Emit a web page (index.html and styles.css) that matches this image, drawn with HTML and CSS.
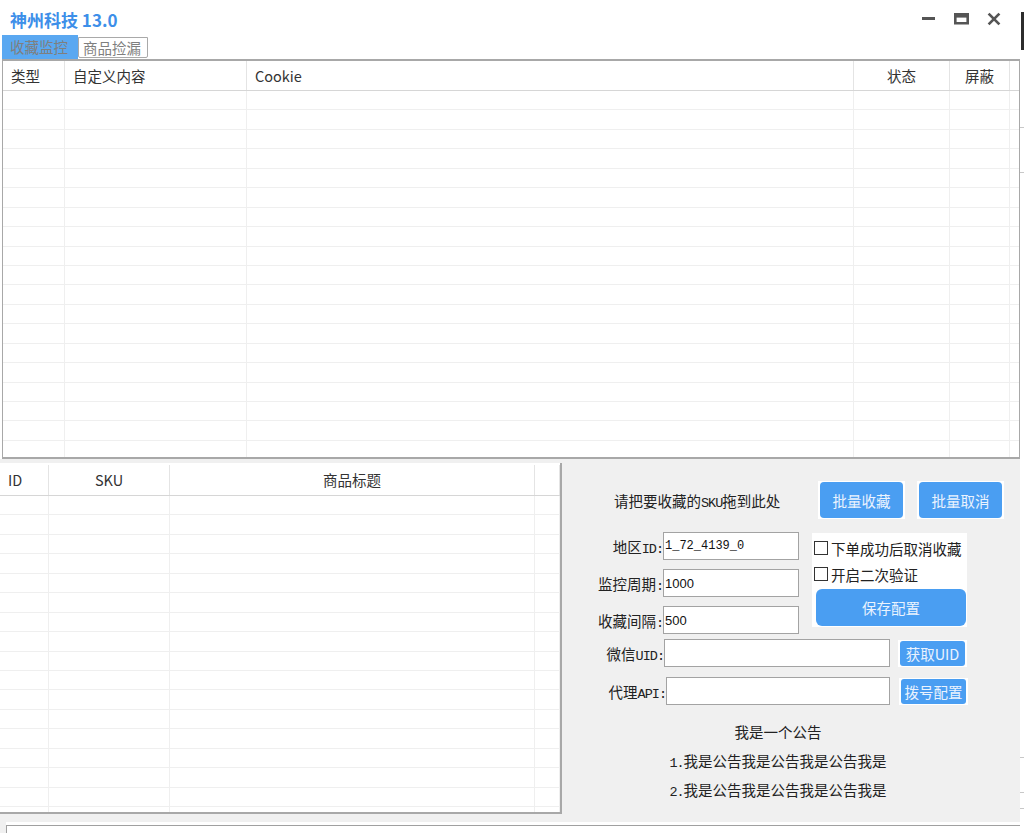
FILE: index.html
```html
<!DOCTYPE html>
<html lang="zh-CN">
<head>
<meta charset="utf-8">
<title>神州科技 13.0</title>
<link rel="stylesheet" href="styles.css">
</head>
<body>
<div class="screen">
  <div class="window">
    <header class="titlebar">
      <h1 class="title">神州科技 13.0</h1>
      <div class="controls">
        <svg class="ctl" width="16" height="16" viewBox="0 0 16 16"><rect x="2" y="7" width="13" height="3" fill="#555"/></svg>
        <svg class="ctl" width="16" height="16" viewBox="0 0 16 16"><rect x="1" y="3" width="15" height="11.5" fill="#555"/><rect x="3.6" y="7.6" width="9.8" height="4.4" fill="#fff"/></svg>
        <svg class="ctl" width="16" height="16" viewBox="0 0 16 16"><path d="M2.6 3.6 L13.4 14.4 M13.4 3.6 L2.6 14.4" stroke="#555" stroke-width="2.7" fill="none"/></svg>
      </div>
    </header>

    <nav class="tabs">
      <span class="tab active">收藏监控</span>
      <span class="tab plain">商品捡漏</span>
    </nav>

    <section class="grid grid-top">
      <div class="trow thead">
        <span class="cell">类型</span>
        <span class="cell">自定义内容</span>
        <span class="cell">Cookie</span>
        <span class="cell center">状态</span>
        <span class="cell center">屏蔽</span>
        <span class="cell last"></span>
      </div>
      <div class="tbody">
        <div class="trow"><i></i><i></i><i></i><i></i><i></i><i></i></div>
        <div class="trow"><i></i><i></i><i></i><i></i><i></i><i></i></div>
        <div class="trow"><i></i><i></i><i></i><i></i><i></i><i></i></div>
        <div class="trow"><i></i><i></i><i></i><i></i><i></i><i></i></div>
        <div class="trow"><i></i><i></i><i></i><i></i><i></i><i></i></div>
        <div class="trow"><i></i><i></i><i></i><i></i><i></i><i></i></div>
        <div class="trow"><i></i><i></i><i></i><i></i><i></i><i></i></div>
        <div class="trow"><i></i><i></i><i></i><i></i><i></i><i></i></div>
        <div class="trow"><i></i><i></i><i></i><i></i><i></i><i></i></div>
        <div class="trow"><i></i><i></i><i></i><i></i><i></i><i></i></div>
        <div class="trow"><i></i><i></i><i></i><i></i><i></i><i></i></div>
        <div class="trow"><i></i><i></i><i></i><i></i><i></i><i></i></div>
        <div class="trow"><i></i><i></i><i></i><i></i><i></i><i></i></div>
        <div class="trow"><i></i><i></i><i></i><i></i><i></i><i></i></div>
        <div class="trow"><i></i><i></i><i></i><i></i><i></i><i></i></div>
        <div class="trow"><i></i><i></i><i></i><i></i><i></i><i></i></div>
        <div class="trow"><i></i><i></i><i></i><i></i><i></i><i></i></div>
        <div class="trow"><i></i><i></i><i></i><i></i><i></i><i></i></div>
        <div class="trow"><i></i><i></i><i></i><i></i><i></i><i></i></div>
      </div>
    </section>

    <section class="lower">
      <div class="grid grid-sku">
        <div class="srow shead">
          <span class="cell">ID</span>
          <span class="cell center">SKU</span>
          <span class="cell center">商品标题</span>
          <span class="cell last"></span>
        </div>
        <div class="sbody">
          <div class="srow"><i></i><i></i><i></i><i></i></div>
          <div class="srow"><i></i><i></i><i></i><i></i></div>
          <div class="srow"><i></i><i></i><i></i><i></i></div>
          <div class="srow"><i></i><i></i><i></i><i></i></div>
          <div class="srow"><i></i><i></i><i></i><i></i></div>
          <div class="srow"><i></i><i></i><i></i><i></i></div>
          <div class="srow"><i></i><i></i><i></i><i></i></div>
          <div class="srow"><i></i><i></i><i></i><i></i></div>
          <div class="srow"><i></i><i></i><i></i><i></i></div>
          <div class="srow"><i></i><i></i><i></i><i></i></div>
          <div class="srow"><i></i><i></i><i></i><i></i></div>
          <div class="srow"><i></i><i></i><i></i><i></i></div>
          <div class="srow"><i></i><i></i><i></i><i></i></div>
          <div class="srow"><i></i><i></i><i></i><i></i></div>
          <div class="srow"><i></i><i></i><i></i><i></i></div>
          <div class="srow"><i></i><i></i><i></i><i></i></div>
          <div class="srow"><i></i><i></i><i></i><i></i></div>
        </div>
      </div>

      <div class="panel">
        <div class="drop-row">
          <span class="drop-text">请把要收藏的<span class="lat">SKU</span>拖到此处</span>
          <span class="btn-frame"><span class="btn btn-lg">批量收藏</span></span>
          <span class="btn-frame gap12"><span class="btn btn-lg">批量取消</span></span>
        </div>

        <div class="form-top">
          <div class="fields">
            <div class="field"><label class="lbl w101">地区<span class="lat">ID:</span></label><input class="inp inp-s mono" type="text" value="1_72_4139_0"></div>
            <div class="field"><label class="lbl w101">监控周期<span class="lat">:</span></label><input class="inp inp-s" type="text" value="1000"></div>
            <div class="field"><label class="lbl w101">收藏间隔<span class="lat">:</span></label><input class="inp inp-s" type="text" value="500"></div>
          </div>
          <div class="side">
            <div class="checks">
              <div class="check"><span class="box"></span>下单成功后取消收藏</div>
              <div class="check"><span class="box"></span>开启二次验证</div>
            </div>
            <div class="save-frame"><span class="btn btn-save">保存配置</span></div>
          </div>
        </div>

        <div class="field row-wx"><label class="lbl w102">微信<span class="lat">UID:</span></label><input class="inp inp-w226" type="text" value=""><span class="btn-frame ml8"><span class="btn btn-sm">获取UID</span></span></div>
        <div class="field row-api"><label class="lbl w104">代理<span class="lat">API:</span></label><input class="inp inp-w224" type="text" value=""><span class="btn-frame ml9"><span class="btn btn-sm">拨号配置</span></span></div>

        <div class="notice">
          <p>我是一个公告</p>
          <p><span class="lat">1.</span>我是公告我是公告我是公告我是</p>
          <p><span class="lat">2.</span>我是公告我是公告我是公告我是</p>
        </div>
      </div>
    </section>

    <div class="footer-row"><div class="footer"><div class="footer-field"></div></div></div>
  </div>
  <div class="strip">
    <div class="strip-dark"></div>
    <div class="strip-line l1"></div>
    <div class="strip-line l2"></div>
    <div class="strip-line l3"></div>
    <div class="strip-line l4"></div>
    <div class="strip-line l5"></div>
  </div>
</div>
</body>
</html>
```
FILE: styles.css
```css
* { box-sizing: border-box; }
html, body { margin: 0; padding: 0; }
body {
  width: 1024px;
  height: 833px;
  overflow: hidden;
  background: #fff;
  font-family: "Noto Sans CJK SC", "Microsoft YaHei", sans-serif;
  font-size: 14.5px;
  color: #222;
}
.screen { display: flex; width: 1024px; height: 833px; }
.window { width: 1020px; height: 833px; display: flex; flex-direction: column; background: #fff; }

/* title bar */
.titlebar { height: 35px; flex: none; display: flex; justify-content: space-between; align-items: flex-start; }
.title { margin: 0; padding: 8px 0 0 10px; font-size: 17px; line-height: 24px; font-weight: 700; color: #3d8fe9; }
.controls { display: flex; gap: 17px; padding: 10px 18px 0 0; }
.ctl { display: block; }

/* tabs */
.tabs { height: 24px; flex: none; display: flex; align-items: flex-end; padding-left: 2px; }
.tab { font-size: 14.5px; color: #7f7f7f; white-space: nowrap; }
.tab.active { height: 24px; width: 76px; padding-left: 8px; line-height: 23px; background: #5aa8f1; }
.tab.plain { height: 21px; width: 70px; margin-bottom: 1px; padding-left: 4px; line-height: 19px; border: 1px solid #a9a9a9; border-radius: 0 0 2px 2px; background: #fff; }

/* grids */
.grid { background: #fff; overflow: hidden; flex: none; }
.grid i { display: block; font-style: normal; }
.cell { display: block; padding-left: 8px; white-space: nowrap; overflow: hidden; }
.cell.center { padding-left: 0; text-align: center; }

.grid-top { height: 400px; margin-left: 2px; border-style: solid; border-color: #a8a8a8; border-width: 2px 1px 2px 1px; }
.trow { display: grid; grid-template-columns: 62px 182px 607px 96px 60px 1fr; height: 19.44px; border-bottom: 1px solid #efefef; }
.trow > * { border-right: 1px solid #efefef; }
.trow > *:last-child { border-right: 0; }
.thead { height: 30px; border-bottom: 1px solid #d6d6d6; line-height: 29px; color: #333; }
.thead > * { border-right-color: #e4e4e4; }
.tbody { height: 366px; overflow: hidden; }

.lower { flex: none; height: 363px; display: flex; align-items: flex-start; padding-top: 4px; background: #f0f0f0; }
.grid-sku { width: 562px; height: 351px; border-style: solid; border-color: #a8a8a8; border-width: 0 2px 2px 0; }
.srow { display: grid; grid-template-columns: 49px 121px 365px 1fr; height: 19.45px; border-bottom: 1px solid #efefef; }
.srow > * { border-right: 1px solid #efefef; }
.shead { height: 33px; border-bottom: 1px solid #d6d6d6; line-height: 30px; padding-top: 2px; color: #333; }
.shead > * { border-right-color: #e4e4e4; }
.sbody { height: 316px; overflow: hidden; }

/* right panel */
.panel { flex: 1; display: flex; flex-direction: column; color: #222; }
.lat { font-family: "Liberation Mono", monospace; font-size: 13.5px; letter-spacing: -1px; line-height: 1; }
.drop-row { margin-top: 18px; height: 38px; display: flex; align-items: center; }
.drop-text { margin-left: 52px; width: 204px; white-space: nowrap; }
.btn-frame { display: flex; background: #fff; padding: 1px 2px; }
.gap12 { margin-left: 12px; }
.ml8 { margin-left: 8px; }
.ml9 { margin-left: 9px; }
.btn { display: flex; align-items: center; justify-content: center; background: #4a9ef2; color: #eaf3fe; border-radius: 4px; white-space: nowrap; }
.btn-lg { width: 83px; height: 36px; }
.btn-sm { width: 65px; height: 25px; border-radius: 3px; }
.btn-save { width: 150px; height: 37px; border-radius: 6px; }

.form-top { margin-top: 13px; display: flex; align-items: flex-start; }
.fields { display: flex; flex-direction: column; gap: 9px; }
.field { display: flex; align-items: center; }
.lbl { text-align: right; white-space: nowrap; }
.w101 { width: 101px; }
.w102 { width: 102px; }
.w104 { width: 104px; }
.inp { height: 28px; margin: 0; padding: 0 1px; border: 1px solid #a3a3a3; background: #fff; outline: none; font-family: "Liberation Sans", sans-serif; font-size: 13px; color: #111; }
.inp.mono { font-family: "Liberation Mono", monospace; font-size: 12px; }
.inp-s { width: 136px; }
.inp-w226 { width: 226px; }
.inp-w224 { width: 224px; }

.side { margin-left: 13px; margin-top: 1px; width: 155px; }
.checks { height: 55px; padding-top: 2px; background: #fff; }
.check { height: 26px; display: flex; align-items: center; white-space: nowrap; }
.box { width: 14px; height: 14px; margin: 0 3px 0 2px; border: 1px solid #333; background: #fff; flex: none; }
.save-frame { display: flex; background: #fff; padding: 1px 1px 1px 4px; }

.row-wx { margin-top: 5px; }
.row-api { margin-top: 10px; }

.notice { width: 432px; margin-top: 12px; text-align: center; }
.notice p { margin: 0; height: 29px; line-height: 29px; }

/* footer */
.footer-row { flex: none; height: 11px; padding-left: 6px; background: #f0f0f0; }
.footer { height: 11px; padding-top: 3px; background: #fff; }
.footer-field { height: 100%; border-top: 1px solid #a0a0a0; border-left: 1px solid #a0a0a0; }

/* right edge strip (window behind) */
.strip { width: 4px; height: 833px; background: #fff; }
.strip-dark { margin: 12px 0 0 1px; height: 38px; background: #2d2d2d; }
.strip-line { height: 1px; background: #c8c8c8; }
.strip-line.l1 { margin-top: 77px; }
.strip-line.l2 { margin-top: 44px; }
.strip-line.l3 { margin-top: 584px; }
.strip-line.l4 { margin-top: 34px; }
.strip-line.l5 { margin-top: 15px; }
```
